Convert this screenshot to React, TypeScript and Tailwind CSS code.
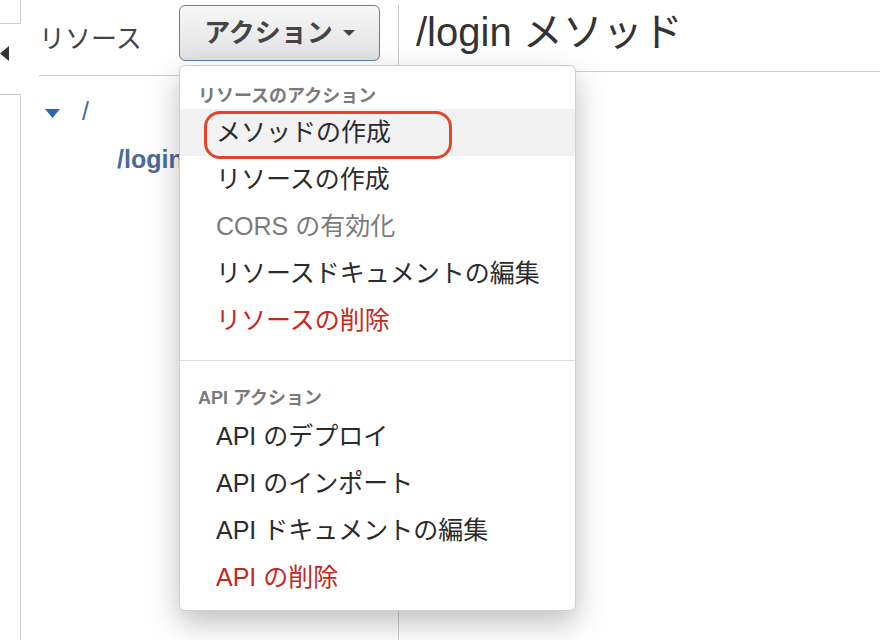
import React from "react";

const font = { fontFamily: '"Liberation Sans", "Noto Sans CJK JP", sans-serif' };

type Item = { label: string; tone?: "normal" | "muted" | "danger"; active?: boolean };

const resourceItems: Item[] = [
  { label: "メソッドの作成", active: true },
  { label: "リソースの作成" },
  { label: "CORS の有効化", tone: "muted" },
  { label: "リソースドキュメントの編集" },
  { label: "リソースの削除", tone: "danger" },
];

const apiItems: Item[] = [
  { label: "API のデプロイ" },
  { label: "API のインポート" },
  { label: "API ドキュメントの編集" },
  { label: "API の削除", tone: "danger" },
];

function MenuRow({ item }: { item: Item }) {
  const color =
    item.tone === "danger" ? "text-[#c5281c]" : item.tone === "muted" ? "text-[#7b7b7b]" : "text-[#2b2b2b]";
  return (
    <div className={`relative h-[47px] flex items-center pl-[36px] text-[25px] ${color} ${item.active ? "bg-[#f2f2f2]" : ""}`}>
      {item.label}
      {item.active && (
        <div className="absolute left-[24px] top-[2px] w-[248px] h-[48px] border-[3px] border-[#e5432b] rounded-[16px]" />
      )}
    </div>
  );
}

function ActionMenu() {
  return (
    <div className="absolute left-[179px] top-[65px] w-[397px] bg-white border border-[#cfcfcf] rounded-[6px] shadow-[0_12px_30px_rgba(0,0,0,0.25)] pt-[17px] pb-[9px]">
      <div className="h-[26px] leading-[26px] pl-[18px] text-[18px] font-bold text-[#7a7a7a]">リソースのアクション</div>
      {resourceItems.map((it) => (
        <MenuRow key={it.label} item={it} />
      ))}
      <div className="mt-[16px] border-t border-[#dcdcdc]" />
      <div className="mt-[24px] mb-[2px] h-[26px] leading-[26px] pl-[18px] text-[18px] font-bold text-[#7a7a7a]">API アクション</div>
      {apiItems.map((it) => (
        <MenuRow key={it.label} item={it} />
      ))}
    </div>
  );
}

export default function App() {
  return (
    <div className="relative w-[880px] h-[640px] overflow-hidden bg-white flex" style={font}>
      {/* left collapsed strip */}
      <div className="w-[21px] flex flex-col shrink-0">
        <div className="h-[24px] border-r border-b border-[#cccccc]" />
        <div className="h-[70px] flex items-center">
          <svg width="9" height="15" viewBox="0 0 9 15" className="mt-[-12px]">
            <polygon points="9,0 9,15 0,7.5" fill="#333" />
          </svg>
        </div>
        <div className="flex-1 border-t border-r border-[#cccccc]" />
      </div>

      {/* resources panel */}
      <div className="w-[377px] shrink-0 pl-[18px]">
        <div className="h-[76px] border-b border-[#cccccc] flex items-start">
          <div className="pt-[20px] text-[26px] text-[#444] w-[140px]">リソース</div>
          <button className="mt-[5px] w-[201px] h-[56px] rounded-[6px] border border-[#5d7fae] bg-gradient-to-b from-[#f7f7f7] to-[#e1e1e1] flex items-center justify-center gap-[10px] text-[26px] font-bold text-[#444]">
            アクション
            <svg width="12" height="6" viewBox="0 0 12 6">
              <polygon points="0,0 12,0 6,6" fill="#444" />
            </svg>
          </button>
        </div>
        <div className="pt-[17px] pl-[6px] flex items-center gap-[22px] text-[#44699e]">
          <svg width="15" height="9" viewBox="0 0 15 9" className="mt-[3px]">
            <polygon points="0,0 15,0 7.5,9" fill="#2f64b5" />
          </svg>
          <span className="text-[25px]">/</span>
        </div>
        <div className="pt-[10px] pl-[78px] text-[25px] font-bold text-[#4a6b9b]">/login</div>
      </div>

      {/* main panel */}
      <div className="flex-1 pt-[5px]">
        <div className="h-full border-l border-[#cccccc] flex flex-col">
          <div className="h-[67px] border-b border-[#cccccc] pl-[17px] leading-[54px] text-[40px] text-[#333]">/login メソッド</div>
        </div>
      </div>

      <ActionMenu />
    </div>
  );
}
